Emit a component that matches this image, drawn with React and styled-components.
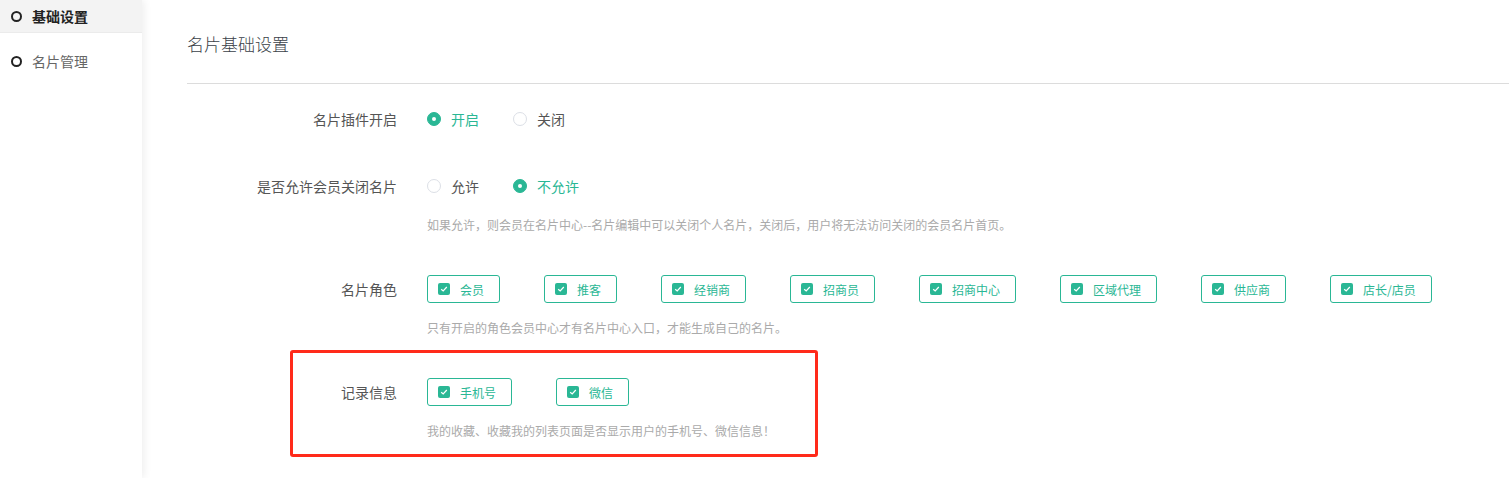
import * as React from 'react';
import styled, { createGlobalStyle } from 'styled-components';

const teal = '#2ab795';

const GlobalStyle = createGlobalStyle`
  html, body {
    margin: 0;
    padding: 0;
    background: #fff;
  }
  body {
    font-family: "Noto Sans CJK SC", "Liberation Sans", sans-serif;
    color: #333;
  }
`;

const Page = styled.div`
  display: flex;
  width: 1509px;
  height: 478px;
  overflow: hidden;
`;

const Sidebar = styled.aside`
  width: 142px;
  flex-shrink: 0;
  background: #fff;
  box-shadow: 2px 0 8px rgba(0, 0, 0, 0.07);
  position: relative;
  z-index: 1;
`;

const NavItem = styled.div`
  display: flex;
  align-items: center;
  height: ${(p) => (p.$active ? '33px' : '56px')};
  padding-left: 11px;
  background: ${(p) => (p.$active ? '#f3f3f3' : 'transparent')};
  border-bottom: ${(p) => (p.$active ? '1px solid #ebebeb' : 'none')};
  box-sizing: border-box;
  font-size: 14px;
  font-weight: ${(p) => (p.$active ? 700 : 400)};
  color: ${(p) => (p.$active ? '#222' : '#666')};
`;

const NavDot = styled.span`
  width: 11px;
  height: 11px;
  border: 2px solid #222;
  border-radius: 50%;
  box-sizing: border-box;
  margin-right: 10px;
`;

const Main = styled.main`
  flex: 1;
  padding-left: 45px;
`;

const Title = styled.h2`
  margin: 0;
  height: 84px;
  box-sizing: border-box;
  padding-top: 32px;
  font-size: 17px;
  font-weight: 300;
  line-height: 24px;
  color: #3a3f48;
  border-bottom: 1px solid #dcdcdc;
`;

const Form = styled.div`
  padding-top: 21px;
`;

const FormItem = styled.div`
  position: relative;
  display: grid;
  grid-template-columns: 210px 1fr;
  column-gap: 30px;
  margin-bottom: ${(p) => p.$gap || 41}px;
`;

const Label = styled.div`
  text-align: right;
  font-size: 14px;
  line-height: 28px;
  color: #555;
`;

const Controls = styled.div`
  display: flex;
  align-items: center;
  min-height: 28px;
`;

const Hint = styled.div`
  grid-column: 2;
  margin-top: 16px;
  font-size: 12px;
  line-height: 18px;
  color: #aaa;
`;

const RadioWrap = styled.label`
  display: inline-flex;
  align-items: center;
  margin-right: 34px;
  font-size: 14px;
  color: ${(p) => (p.$checked ? teal : '#555')};
`;

const RadioCircle = styled.span`
  width: 14px;
  height: 14px;
  border-radius: 50%;
  box-sizing: border-box;
  margin-right: 10px;
  background: ${(p) => (p.$checked ? teal : '#fff')};
  border: 1px solid ${(p) => (p.$checked ? teal : '#dcdfe6')};
  display: flex;
  align-items: center;
  justify-content: center;
  &::after {
    content: '';
    width: 4px;
    height: 4px;
    border-radius: 50%;
    background: #fff;
    display: ${(p) => (p.$checked ? 'block' : 'none')};
  }
`;

const CheckBtn = styled.label`
  display: inline-flex;
  align-items: center;
  height: 28px;
  box-sizing: border-box;
  padding: 0 15px 0 10px;
  margin-right: 44px;
  border: 1px solid ${teal};
  border-radius: 3px;
  font-size: 12px;
  color: ${teal};
  white-space: nowrap;
`;

const CheckBox = styled.span`
  width: 12px;
  height: 12px;
  border-radius: 2px;
  background: ${teal};
  margin-right: 10px;
  display: flex;
  align-items: center;
  justify-content: center;
`;

// red annotation frame drawn over the "记录信息" row
const Highlight = styled.div`
  position: absolute;
  left: 103px;
  top: -28px;
  width: 528px;
  height: 107px;
  border: 3px solid #ff2a1a;
  border-radius: 3px;
  box-sizing: border-box;
  pointer-events: none;
`;

const Radio = ({ checked, children }) => (
  <RadioWrap $checked={checked}>
    <RadioCircle $checked={checked} />
    {children}
  </RadioWrap>
);

const Check = ({ children }) => (
  <CheckBtn>
    <CheckBox>
      <svg width="8" height="8" viewBox="0 0 8 8">
        <path d="M1.2 4.2 L3.2 6 L6.8 2" fill="none" stroke="#fff" strokeWidth="1.2" />
      </svg>
    </CheckBox>
    {children}
  </CheckBtn>
);

const roles = ['会员', '推客', '经销商', '招商员', '招商中心', '区域代理', '供应商', '店长/店员'];

export default function App() {
  return (
    <>
      <GlobalStyle />
      <Page>
        <Sidebar>
          <NavItem $active>
            <NavDot />
            基础设置
          </NavItem>
          <NavItem>
            <NavDot />
            名片管理
          </NavItem>
        </Sidebar>
        <Main>
          <Title>名片基础设置</Title>
          <Form>
            <FormItem $gap={39}>
              <Label>名片插件开启</Label>
              <Controls>
                <Radio checked>开启</Radio>
                <Radio>关闭</Radio>
              </Controls>
            </FormItem>
            <FormItem>
              <Label>是否允许会员关闭名片</Label>
              <Controls>
                <Radio>允许</Radio>
                <Radio checked>不允许</Radio>
              </Controls>
              <Hint>如果允许，则会员在名片中心--名片编辑中可以关闭个人名片，关闭后，用户将无法访问关闭的会员名片首页。</Hint>
            </FormItem>
            <FormItem>
              <Label>名片角色</Label>
              <Controls>
                {roles.map((r) => (
                  <Check key={r}>{r}</Check>
                ))}
              </Controls>
              <Hint>只有开启的角色会员中心才有名片中心入口，才能生成自己的名片。</Hint>
            </FormItem>
            <FormItem>
              <Highlight />
              <Label>记录信息</Label>
              <Controls>
                <Check>手机号</Check>
                <Check>微信</Check>
              </Controls>
              <Hint>我的收藏、收藏我的列表页面是否显示用户的手机号、微信信息！</Hint>
            </FormItem>
          </Form>
        </Main>
      </Page>
    </>
  );
}
